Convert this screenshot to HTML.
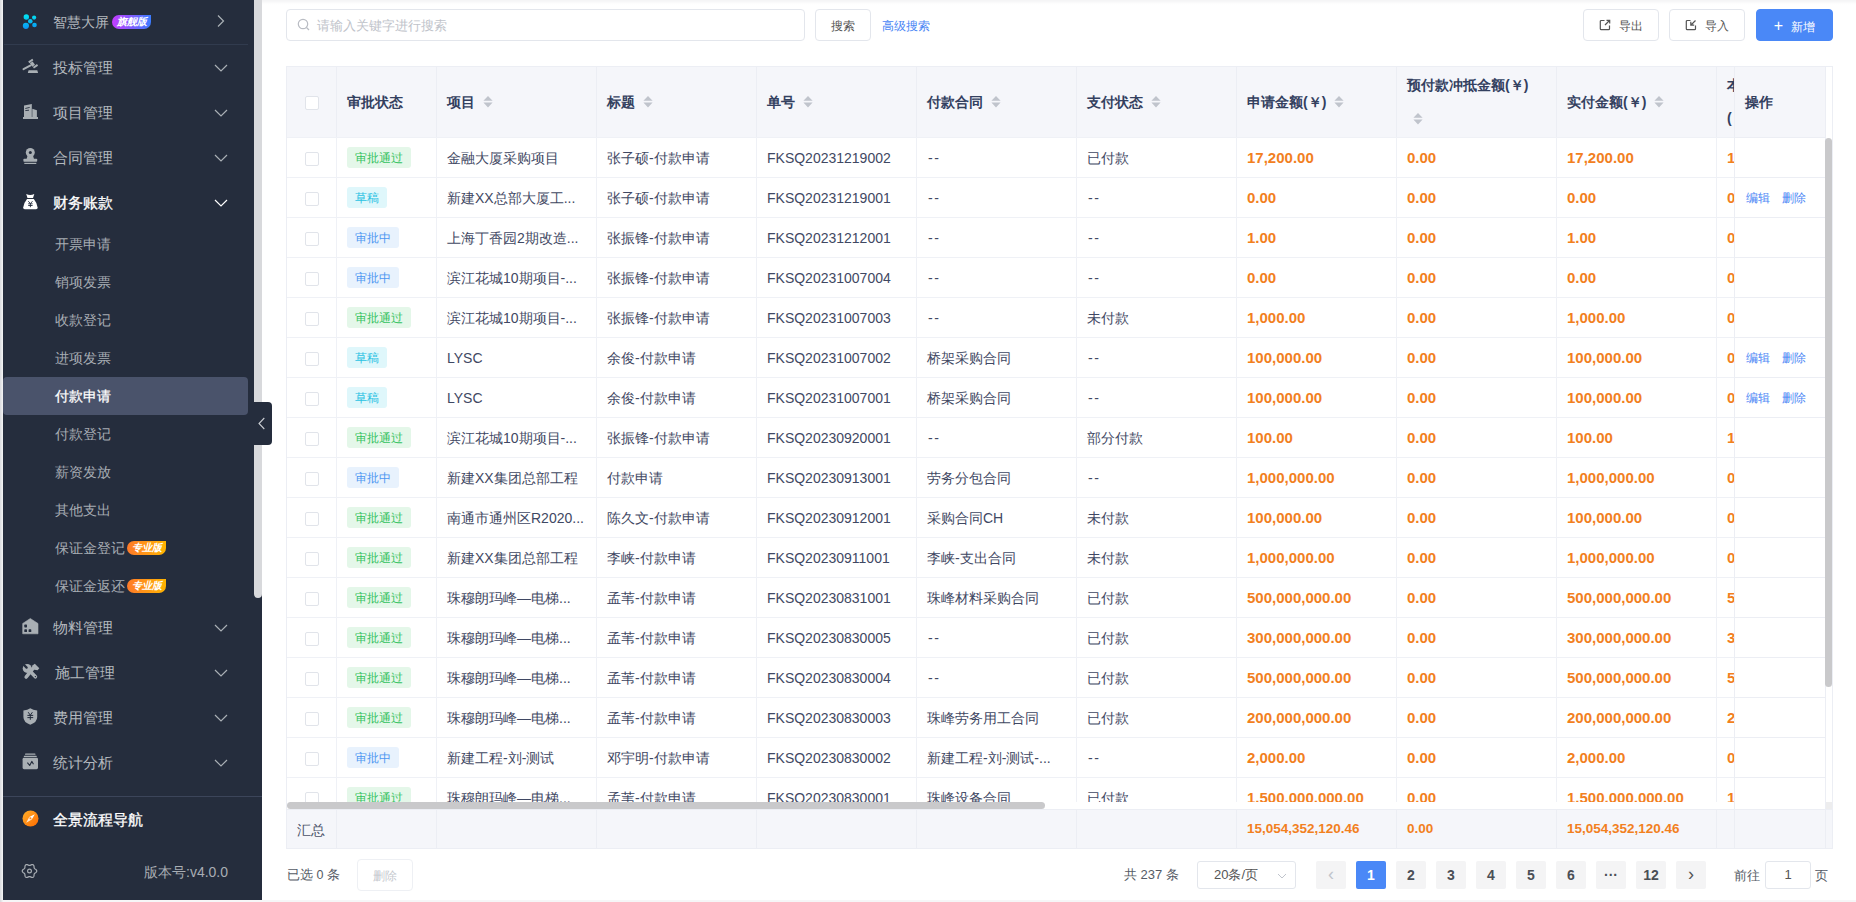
<!DOCTYPE html>
<html><head><meta charset="utf-8">
<style>
*{box-sizing:border-box;margin:0;padding:0}
html,body{width:1856px;height:902px;overflow:hidden;background:#f6f6f7;font-family:"Liberation Sans",sans-serif;}
.abs{position:absolute}
#side{position:absolute;left:3px;top:0;width:259px;height:900px;background:#252d3d;overflow:hidden}
#lstrip{position:absolute;left:0;top:0;width:3px;height:902px;background:linear-gradient(90deg,#d9dadd,#f4f4f5)}
.mi{position:absolute;left:0;width:245px;height:45px;color:#b3b8be;font-size:15px;line-height:45px}
.mi .t{position:absolute;left:50px;top:0}
.mi svg.ic{position:absolute;left:15px;top:10px}
.mi .chev{position:absolute;left:211px;top:19px}
.sub{position:absolute;left:0;width:245px;height:38px;color:#a7acb3;font-size:14px;line-height:38px}
.sub .t{position:absolute;left:52px;top:0}
.sub.act{background:#4a536b;color:#fff;border-radius:4px;-webkit-text-stroke:0.25px #fff}
.badge{position:absolute;height:14px;border-radius:7px 0 7px 7px;color:#fff;font-size:10px;line-height:14px;font-style:italic;text-align:center;font-weight:bold}
#thumb{position:absolute;left:254px;top:0;width:8px;height:598px;background:#d8d9dc;border-radius:0 0 4px 4px;z-index:5}
#coll{position:absolute;left:254px;top:402px;width:18px;height:43px;background:#252d3d;border-radius:0 4px 4px 0;z-index:6}
#main{position:absolute;left:262px;top:0;width:1594px;height:900px;background:linear-gradient(180deg,#f4f4f5 0,#f8f8f9 2px,#fcfcfc 3px,#fff 5px);}
.btn{position:absolute;height:32px;border:1px solid #e3e6ec;border-radius:4px;background:#fff;color:#555;font-size:12px;line-height:32px;text-align:center}
.tbl{position:absolute;left:286px;top:66px;width:1547px;height:783px;overflow:hidden}
.head{position:absolute;left:0;top:0;width:1539px;height:71px;background:#f5f6fa}
.vl{position:absolute;top:0;width:1px;height:736px;background:#eff1f6}
.hl{position:absolute;left:0;width:1448px;height:1px;background:#eff1f6}
.row{position:absolute;left:0;width:1448px;height:40px}
.c{position:absolute;top:1px;line-height:41px;font-size:14px;color:#3f4863;white-space:nowrap}
.amt{color:#f2801e;font-weight:bold;font-size:15px;top:0px}
.cb{position:absolute;top:15px;width:14px;height:14px;border:1px solid #e1e4ea;border-radius:2px;background:#fff}
.tag{position:absolute;top:10px;height:21px;line-height:22px;font-size:12px;padding:0 8px;border-radius:3px;white-space:nowrap}
.tg{background:#e4f7e9;color:#33c25e}
.td{background:#dff7fb;color:#2bc2e3}
.tb{background:#e8f2fd;color:#4c96f1}
.hd{position:absolute;top:1px;line-height:71px;font-size:14px;font-weight:bold;color:#33405f;white-space:nowrap}
.sort{display:inline-block;vertical-align:middle;margin-left:8px;width:10px;height:12px;position:relative;top:-1px}
.fixed{position:absolute;left:1448px;top:0;width:91px;height:743px;background:#fff;border-left:1px solid #eceef4}
.frow{position:absolute;left:0;width:90px;height:40px;border-top:1px solid #eceef4}
.op{position:absolute;top:0;line-height:40px;font-size:12px;color:#4a86f5}
.sum{position:absolute;left:0;top:743px;width:1547px;height:40px;background:#f5f6fa;border-top:1px solid #eceef4;border-bottom:1px solid #eceef4}
.pg{position:absolute;top:861px;width:30px;height:28px;background:#f4f4f5;border-radius:2px;font-size:14px;font-weight:bold;color:#4b4f56;text-align:center;line-height:28px}
</style></head>
<body>
<div id="lstrip"></div>
<div id="side">
  <!-- top item -->
  <div class="mi" style="top:-1px;height:45px">
    <svg class="ic" width="24" height="24" viewBox="0 0 24 24" style="left:15px;top:11px">
      <defs><linearGradient id="lg1" gradientUnits="userSpaceOnUse" x1="0" y1="4" x2="0" y2="19"><stop offset="0" stop-color="#00e8f2"/><stop offset="1" stop-color="#0b94f2"/></linearGradient></defs>
      <circle cx="8.3" cy="7.0" r="2.7" fill="url(#lg1)"/><circle cx="16.1" cy="7.6" r="2.1" fill="url(#lg1)"/>
      <circle cx="12.3" cy="11.2" r="2.3" fill="url(#lg1)"/><circle cx="7.9" cy="15.8" r="3.1" fill="url(#lg1)"/>
      <circle cx="16.5" cy="15.0" r="2.3" fill="url(#lg1)"/>
    </svg>
    <span class="t" style="left:50px;font-size:14px;top:1px">智慧大屏</span>
    <svg class="chev" width="14" height="14" viewBox="0 0 14 14" style="left:211px;top:15px"><path d="M4 1.5 L9.5 7 L4 12.5" fill="none" stroke="#aab0b6" stroke-width="1.2"/></svg>
  </div>
  <div class="badge" style="left:109px;top:15px;width:39px;background:linear-gradient(90deg,#c53cff,#3b7cff)">旗舰版</div>
  <div class="abs" style="left:1px;top:44px;width:244px;height:1px;background:#313b4e"></div>

  <div class="mi" style="top:45px"><svg class="ic" width="24" height="24" viewBox="0 0 24 24"><path d="M10.2 6.6 L14.3 3.7 L15.4 5.3 L11.3 8.2 Z M11.9 8.3 L14.6 6.4 L17.0 9.8 L14.3 11.7 Z M14.9 12.0 L19.0 9.1 L20.1 10.7 L16.0 13.6 Z" fill="#a9afb4"/><path d="M5.5 14.2 L12.6 10.4" stroke="#a9afb4" stroke-width="1.9" stroke-linecap="round"/><path d="M10.6 15.2 H19.3 L20.1 18 H9.8 Z" fill="#a9afb4"/></svg><span class="t">投标管理</span><svg class="chev" width="14" height="8" viewBox="0 0 14 8"><path d="M1 1 L7 7 L13 1" fill="none" stroke="#aab0b6" stroke-width="1.2"/></svg></div>
<div class="mi" style="top:90px"><svg class="ic" width="24" height="24" viewBox="0 0 24 24"><path d="M6 5.6 L13.8 4.0 V17 H6 Z" fill="#a9afb4"/><path d="M14.3 8.8 L18.9 10.3 V17 H14.3 Z" fill="#a9afb4"/><path d="M5 17 H20 V19 H5 Z" fill="#a9afb4"/><path d="M7.3 8.5 L11.7 7.4 M7.3 10.6 L11 10.2" stroke="#252d3d" stroke-width="0.9"/></svg><span class="t">项目管理</span><svg class="chev" width="14" height="8" viewBox="0 0 14 8"><path d="M1 1 L7 7 L13 1" fill="none" stroke="#aab0b6" stroke-width="1.2"/></svg></div>
<div class="mi" style="top:135px"><svg class="ic" width="24" height="24" viewBox="0 0 24 24"><circle cx="12.3" cy="7.5" r="4.5" fill="#a9afb4"/><circle cx="12.3" cy="7.5" r="1.5" fill="#252d3d"/><path d="M9.6 10.5 H15 L16 14 H8.6 Z" fill="#a9afb4"/><rect x="5.4" y="13.8" width="13.8" height="3" rx="0.8" fill="#a9afb4"/><rect x="6.3" y="17.8" width="12" height="1.2" fill="#a9afb4"/></svg><span class="t">合同管理</span><svg class="chev" width="14" height="8" viewBox="0 0 14 8"><path d="M1 1 L7 7 L13 1" fill="none" stroke="#aab0b6" stroke-width="1.2"/></svg></div>
<div class="mi" style="top:180px"><svg class="ic" width="24" height="24" viewBox="0 0 24 24"><path d="M8.2 4 Q12.2 5.8 16.3 4 L15 8 H9.5 Z" fill="#fff"/><path d="M9 9 H15.8 Q18.8 12.5 19.6 17.5 Q19.8 19.2 18 19.2 H6.8 Q5 19.2 5.2 17.5 Q6 12.5 9 9 Z" fill="#fff"/><path d="M10.3 11.2 L12.4 13.6 L14.5 11.2 M10.2 13.8 H14.6 M10.2 15.5 H14.6 M12.4 13.6 V17.2" fill="none" stroke="#252d3d" stroke-width="0.9"/></svg><span class="t" style="color:#fff;-webkit-text-stroke:0.3px #fff">财务账款</span><svg class="chev" width="14" height="8" viewBox="0 0 14 8"><path d="M1 1 L7 7 L13 1" fill="none" stroke="#fff" stroke-width="1.2"/></svg></div>
<div class="sub" style="top:225px"><span class="t">开票申请</span></div>
<div class="sub" style="top:263px"><span class="t">销项发票</span></div>
<div class="sub" style="top:301px"><span class="t">收款登记</span></div>
<div class="sub" style="top:339px"><span class="t">进项发票</span></div>
<div class="sub act" style="top:377px"><span class="t">付款申请</span></div>
<div class="sub" style="top:415px"><span class="t">付款登记</span></div>
<div class="sub" style="top:453px"><span class="t">薪资发放</span></div>
<div class="sub" style="top:491px"><span class="t">其他支出</span></div>
<div class="sub" style="top:529px"><span class="t">保证金登记</span></div>
<div class="badge" style="left:124px;top:541px;width:39px;background:linear-gradient(90deg,#ff7a2a,#ffb400)">专业版</div>
<div class="sub" style="top:567px"><span class="t">保证金返还</span></div>
<div class="badge" style="left:124px;top:579px;width:39px;background:linear-gradient(90deg,#ff7a2a,#ffb400)">专业版</div>
<div class="mi" style="top:605px"><svg class="ic" width="24" height="24" viewBox="0 0 24 24"><path d="M12.3 3.5 L20 8.5 V18.8 H4.7 V8.5 Z" fill="#a9afb4" stroke="#a9afb4" stroke-width="0.6" stroke-linejoin="round"/><rect x="6.3" y="9.6" width="2.7" height="2.8" rx="0.6" fill="#252d3d"/><rect x="6.3" y="14.3" width="2.7" height="2.8" rx="0.6" fill="#252d3d"/><rect x="10.6" y="14.3" width="2.7" height="2.8" rx="0.6" fill="#252d3d"/></svg><span class="t">物料管理</span><svg class="chev" width="14" height="8" viewBox="0 0 14 8"><path d="M1 1 L7 7 L13 1" fill="none" stroke="#aab0b6" stroke-width="1.2"/></svg></div>
<div class="mi" style="top:650px"><svg class="ic" width="24" height="24" viewBox="0 0 24 24"><circle cx="9.2" cy="8.4" r="4.5" fill="#a9afb4"/><path d="M4.8 3.8 L8.6 7.6" stroke="#252d3d" stroke-width="2.3" stroke-linecap="round"/><path d="M11.6 10.8 L17.4 16.8" stroke="#a9afb4" stroke-width="3.6" stroke-linecap="round"/><path d="M15.6 7.6 L8.2 17" stroke="#a9afb4" stroke-width="3.6" stroke-linecap="round"/><path d="M14 5.8 L16.8 3.8 L21.3 8.2 L19.6 10.2 L16.4 9.8 Z" fill="#a9afb4"/><circle cx="17.4" cy="16.6" r="0.7" fill="#252d3d"/></svg><span class="t" style="left:52px">施工管理</span><svg class="chev" width="14" height="8" viewBox="0 0 14 8"><path d="M1 1 L7 7 L13 1" fill="none" stroke="#aab0b6" stroke-width="1.2"/></svg></div>
<div class="mi" style="top:695px"><svg class="ic" width="24" height="24" viewBox="0 0 24 24"><path d="M12.3 3.2 Q15 4.9 19.2 5.6 V12 Q19.2 17.3 12.3 19.8 Q5.4 17.3 5.4 12 V5.6 Q9.6 4.9 12.3 3.2 Z" fill="#a9afb4"/><path d="M10.2 7.2 L12.3 10.2 L14.4 7.2 M9.4 10.4 H15.2 M9.4 12.6 H15.2 M12.3 10.2 V14.8" fill="none" stroke="#252d3d" stroke-width="1"/></svg><span class="t">费用管理</span><svg class="chev" width="14" height="8" viewBox="0 0 14 8"><path d="M1 1 L7 7 L13 1" fill="none" stroke="#aab0b6" stroke-width="1.2"/></svg></div>
<div class="mi" style="top:740px"><svg class="ic" width="24" height="24" viewBox="0 0 24 24"><rect x="7" y="3.6" width="10.5" height="1.2" rx="0.6" fill="#a9afb4"/><rect x="5.8" y="5.8" width="13" height="1.2" rx="0.6" fill="#a9afb4"/><rect x="4.6" y="7.8" width="15.4" height="11.4" rx="1.4" fill="#a9afb4"/><path d="M9.4 12.6 L11.7 15.5 L13.8 11.4 L15.5 14.3" fill="none" stroke="#252d3d" stroke-width="1.1" stroke-linejoin="round"/></svg><span class="t">统计分析</span><svg class="chev" width="14" height="8" viewBox="0 0 14 8"><path d="M1 1 L7 7 L13 1" fill="none" stroke="#aab0b6" stroke-width="1.2"/></svg></div>
  <div class="abs" style="left:0;top:796px;width:259px;height:1px;background:#3c455a"></div>
  <div class="mi" style="top:797px">
    <svg class="ic" width="24" height="24" viewBox="0 0 24 24" style="left:15px;top:10px">
      <defs><linearGradient id="og" x1="0" y1="0" x2="1" y2="1"><stop offset="0" stop-color="#ffb02a"/><stop offset="1" stop-color="#ff6a00"/></linearGradient></defs>
      <circle cx="12.5" cy="11.5" r="8" fill="url(#og)"/>
      <path d="M16.8 7.2 L13.8 12.6 L11.2 10.0 Z" fill="#fff"/><path d="M8.2 15.8 L11.2 10.0 L13.8 12.6 Z" fill="#ffe8d0"/>
      <circle cx="12.5" cy="11.3" r="1" fill="#ff8a1a"/>
    </svg>
    <span class="t" style="color:#fff;-webkit-text-stroke:0.3px #fff;left:50px">全景流程导航</span>
  </div>
  <svg class="abs" width="18" height="18" viewBox="0 0 18 18" style="left:18px;top:862px">
    <path d="M15.75 9.00 L15.61 9.62 L15.22 10.19 L14.68 10.66 L14.11 11.04 L13.63 11.39 L13.31 11.78 L13.14 12.25 L13.08 12.84 L13.03 13.53 L12.89 14.23 L12.59 14.85 L12.12 15.28 L11.52 15.47 L10.83 15.41 L10.16 15.18 L9.54 14.88 L8.99 14.64 L8.50 14.55 L8.01 14.64 L7.46 14.88 L6.84 15.18 L6.17 15.41 L5.48 15.47 L4.88 15.28 L4.41 14.85 L4.11 14.23 L3.97 13.53 L3.92 12.84 L3.86 12.25 L3.69 11.78 L3.37 11.39 L2.89 11.04 L2.32 10.66 L1.78 10.19 L1.39 9.62 L1.25 9.00 L1.39 8.38 L1.78 7.81 L2.32 7.34 L2.89 6.96 L3.37 6.61 L3.69 6.22 L3.86 5.75 L3.92 5.16 L3.97 4.47 L4.11 3.77 L4.41 3.15 L4.87 2.72 L5.48 2.53 L6.17 2.59 L6.84 2.82 L7.46 3.12 L8.01 3.36 L8.50 3.45 L8.99 3.36 L9.54 3.12 L10.16 2.82 L10.83 2.59 L11.52 2.53 L12.12 2.72 L12.59 3.15 L12.89 3.77 L13.03 4.47 L13.08 5.16 L13.14 5.75 L13.31 6.23 L13.63 6.61 L14.11 6.96 L14.68 7.34 L15.22 7.81 L15.61 8.38 Z" fill="none" stroke="#a9aeb4" stroke-width="1.2" stroke-linejoin="round"/>
    <circle cx="8.5" cy="9" r="1.9" fill="none" stroke="#a9aeb4" stroke-width="1.2"/>
  </svg>
  <span class="abs" style="left:141px;top:862px;font-size:14px;color:#a9aeb4;line-height:20px">版本号:v4.0.0</span>
</div>
<div id="thumb"></div>
<div id="coll"><svg width="18" height="43" viewBox="0 0 18 43"><path d="M10.3 16 L5 21.5 L10.3 27" fill="none" stroke="#c9ccd1" stroke-width="1.1"/></svg></div>

<div id="main"></div>
<!-- toolbar -->
<div class="abs" style="left:286px;top:9px;width:519px;height:32px;border:1px solid #e3e6ec;border-radius:4px;background:#fff">
  <svg class="abs" width="14" height="14" viewBox="0 0 14 14" style="left:10px;top:8px"><circle cx="6" cy="6" r="4.7" fill="none" stroke="#b9bcc3" stroke-width="1.2"/><path d="M9.5 9.5 L12 12" stroke="#b9bcc3" stroke-width="1.2"/></svg>
  <span class="abs" style="left:30px;top:1px;line-height:30px;font-size:13px;color:#c0c3ca">请输入关键字进行搜索</span>
</div>
<div class="btn" style="left:815px;top:9px;width:56px">搜索</div>
<span class="abs" style="left:882px;top:10px;line-height:32px;font-size:12px;color:#4a86f5">高级搜索</span>
<div class="btn" style="left:1583px;top:9px;width:76px"><svg width="12" height="12" viewBox="0 0 12 12" style="vertical-align:-1px;margin-right:8px"><path d="M5.5 1.5 H2.3 Q1.3 1.5 1.3 2.5 V9.7 Q1.3 10.7 2.3 10.7 H9.5 Q10.5 10.7 10.5 9.7 V6.5" fill="none" stroke="#555" stroke-width="1.2"/><path d="M6 6 L10.5 1.5 M7.5 1.3 H10.7 V4.5" fill="none" stroke="#555" stroke-width="1.2"/></svg>导出</div>
<div class="btn" style="left:1669px;top:9px;width:76px"><svg width="12" height="12" viewBox="0 0 12 12" style="vertical-align:-1px;margin-right:8px"><path d="M5.5 1.5 H2.3 Q1.3 1.5 1.3 2.5 V9.7 Q1.3 10.7 2.3 10.7 H9.5 Q10.5 10.7 10.5 9.7 V6.5" fill="none" stroke="#555" stroke-width="1.2"/><path d="M10.5 1.5 L6 6 M5.8 2.8 V6.2 H9.2" fill="none" stroke="#555" stroke-width="1.2"/></svg>导入</div>
<div class="btn" style="left:1756px;top:9px;width:77px;background:#4a88f7;border-color:#4a88f7;color:#fff"><span style="font-size:16px;margin-right:8px">+</span>新增</div>

<div class="tbl">
  <div class="head"></div>
  <div class="abs" style="left:50px;top:0;width:1px;height:71px;background:#eceef4"></div><div class="abs" style="left:150px;top:0;width:1px;height:71px;background:#eceef4"></div><div class="abs" style="left:310px;top:0;width:1px;height:71px;background:#eceef4"></div><div class="abs" style="left:470px;top:0;width:1px;height:71px;background:#eceef4"></div><div class="abs" style="left:630px;top:0;width:1px;height:71px;background:#eceef4"></div><div class="abs" style="left:790px;top:0;width:1px;height:71px;background:#eceef4"></div><div class="abs" style="left:950px;top:0;width:1px;height:71px;background:#eceef4"></div><div class="abs" style="left:1110px;top:0;width:1px;height:71px;background:#eceef4"></div><div class="abs" style="left:1270px;top:0;width:1px;height:71px;background:#eceef4"></div><div class="abs" style="left:1430px;top:0;width:1px;height:71px;background:#eceef4"></div><div class="cb" style="left:19px;top:30px"></div>
<span class="hd" style="left:61px">审批状态</span>
<span class="hd" style="left:161px">项目<svg class="sort" viewBox="0 0 10 12"><path d="M5 0 L9.6 4.8 H0.4 Z M5 11.4 L9.6 6.6 H0.4 Z" fill="#c0c4cc"/></svg></span>
<span class="hd" style="left:321px">标题<svg class="sort" viewBox="0 0 10 12"><path d="M5 0 L9.6 4.8 H0.4 Z M5 11.4 L9.6 6.6 H0.4 Z" fill="#c0c4cc"/></svg></span>
<span class="hd" style="left:481px">单号<svg class="sort" viewBox="0 0 10 12"><path d="M5 0 L9.6 4.8 H0.4 Z M5 11.4 L9.6 6.6 H0.4 Z" fill="#c0c4cc"/></svg></span>
<span class="hd" style="left:641px">付款合同<svg class="sort" viewBox="0 0 10 12"><path d="M5 0 L9.6 4.8 H0.4 Z M5 11.4 L9.6 6.6 H0.4 Z" fill="#c0c4cc"/></svg></span>
<span class="hd" style="left:801px">支付状态<svg class="sort" viewBox="0 0 10 12"><path d="M5 0 L9.6 4.8 H0.4 Z M5 11.4 L9.6 6.6 H0.4 Z" fill="#c0c4cc"/></svg></span>
<span class="hd" style="left:961px">申请金额(￥)<svg class="sort" viewBox="0 0 10 12"><path d="M5 0 L9.6 4.8 H0.4 Z M5 11.4 L9.6 6.6 H0.4 Z" fill="#c0c4cc"/></svg></span>
<span class="hd" style="left:1281px">实付金额(￥)<svg class="sort" viewBox="0 0 10 12"><path d="M5 0 L9.6 4.8 H0.4 Z M5 11.4 L9.6 6.6 H0.4 Z" fill="#c0c4cc"/></svg></span>
<span class="hd" style="left:1121px;line-height:20px;top:9px">预付款冲抵金额(￥)</span>
<svg class="abs" viewBox="0 0 10 12" width="10" height="12" style="left:1127px;top:47px"><path d="M5 0 L9.6 4.8 H0.4 Z M5 11.4 L9.6 6.6 H0.4 Z" fill="#c0c4cc"/></svg>
<div class="abs" style="left:1430px;top:0;width:18px;height:71px;overflow:hidden"><span class="hd" style="left:11px;line-height:20px;top:9px;white-space:normal;width:14px">本<br><span style="position:relative;top:13px">(</span></span></div>
  <div class="abs" style="left:0;top:71px;width:1448px;height:665px;overflow:hidden">
    <div class="abs" style="left:0;top:-71px;width:1448px;height:800px">
    <div class="vl" style="left:50px"></div><div class="vl" style="left:150px"></div><div class="vl" style="left:310px"></div><div class="vl" style="left:470px"></div><div class="vl" style="left:630px"></div><div class="vl" style="left:790px"></div><div class="vl" style="left:950px"></div><div class="vl" style="left:1110px"></div><div class="vl" style="left:1270px"></div><div class="vl" style="left:1430px"></div>
    <div class="hl" style="top:71px"></div><div class="hl" style="top:111px"></div><div class="hl" style="top:151px"></div><div class="hl" style="top:191px"></div><div class="hl" style="top:231px"></div><div class="hl" style="top:271px"></div><div class="hl" style="top:311px"></div><div class="hl" style="top:351px"></div><div class="hl" style="top:391px"></div><div class="hl" style="top:431px"></div><div class="hl" style="top:471px"></div><div class="hl" style="top:511px"></div><div class="hl" style="top:551px"></div><div class="hl" style="top:591px"></div><div class="hl" style="top:631px"></div><div class="hl" style="top:671px"></div><div class="hl" style="top:711px"></div><div class="hl" style="top:751px"></div>
    <div class="row" style="top:71px"><div class="cb" style="left:19px"></div><span class="tag tg" style="left:61px">审批通过</span><span class="c" style="left:161px">金融大厦采购项目</span><span class="c" style="left:321px">张子硕-付款申请</span><span class="c" style="left:481px">FKSQ20231219002</span><span class="c" style="left:641px;letter-spacing:1.5px;padding-left:1px">--</span><span class="c" style="left:801px">已付款</span><span class="c amt" style="left:961px">17,200.00</span><span class="c amt" style="left:1121px">0.00</span><span class="c amt" style="left:1281px">17,200.00</span><span class="c amt" style="left:1441px">1</span></div>
<div class="row" style="top:111px"><div class="cb" style="left:19px"></div><span class="tag td" style="left:61px">草稿</span><span class="c" style="left:161px">新建XX总部大厦工...</span><span class="c" style="left:321px">张子硕-付款申请</span><span class="c" style="left:481px">FKSQ20231219001</span><span class="c" style="left:641px;letter-spacing:1.5px;padding-left:1px">--</span><span class="c" style="left:801px;letter-spacing:1.5px;padding-left:1px">--</span><span class="c amt" style="left:961px">0.00</span><span class="c amt" style="left:1121px">0.00</span><span class="c amt" style="left:1281px">0.00</span><span class="c amt" style="left:1441px">0</span></div>
<div class="row" style="top:151px"><div class="cb" style="left:19px"></div><span class="tag tb" style="left:61px">审批中</span><span class="c" style="left:161px">上海丁香园2期改造...</span><span class="c" style="left:321px">张振锋-付款申请</span><span class="c" style="left:481px">FKSQ20231212001</span><span class="c" style="left:641px;letter-spacing:1.5px;padding-left:1px">--</span><span class="c" style="left:801px;letter-spacing:1.5px;padding-left:1px">--</span><span class="c amt" style="left:961px">1.00</span><span class="c amt" style="left:1121px">0.00</span><span class="c amt" style="left:1281px">1.00</span><span class="c amt" style="left:1441px">0</span></div>
<div class="row" style="top:191px"><div class="cb" style="left:19px"></div><span class="tag tb" style="left:61px">审批中</span><span class="c" style="left:161px">滨江花城10期项目-...</span><span class="c" style="left:321px">张振锋-付款申请</span><span class="c" style="left:481px">FKSQ20231007004</span><span class="c" style="left:641px;letter-spacing:1.5px;padding-left:1px">--</span><span class="c" style="left:801px;letter-spacing:1.5px;padding-left:1px">--</span><span class="c amt" style="left:961px">0.00</span><span class="c amt" style="left:1121px">0.00</span><span class="c amt" style="left:1281px">0.00</span><span class="c amt" style="left:1441px">0</span></div>
<div class="row" style="top:231px"><div class="cb" style="left:19px"></div><span class="tag tg" style="left:61px">审批通过</span><span class="c" style="left:161px">滨江花城10期项目-...</span><span class="c" style="left:321px">张振锋-付款申请</span><span class="c" style="left:481px">FKSQ20231007003</span><span class="c" style="left:641px;letter-spacing:1.5px;padding-left:1px">--</span><span class="c" style="left:801px">未付款</span><span class="c amt" style="left:961px">1,000.00</span><span class="c amt" style="left:1121px">0.00</span><span class="c amt" style="left:1281px">1,000.00</span><span class="c amt" style="left:1441px">0</span></div>
<div class="row" style="top:271px"><div class="cb" style="left:19px"></div><span class="tag td" style="left:61px">草稿</span><span class="c" style="left:161px">LYSC</span><span class="c" style="left:321px">余俊-付款申请</span><span class="c" style="left:481px">FKSQ20231007002</span><span class="c" style="left:641px">桥架采购合同</span><span class="c" style="left:801px;letter-spacing:1.5px;padding-left:1px">--</span><span class="c amt" style="left:961px">100,000.00</span><span class="c amt" style="left:1121px">0.00</span><span class="c amt" style="left:1281px">100,000.00</span><span class="c amt" style="left:1441px">0</span></div>
<div class="row" style="top:311px"><div class="cb" style="left:19px"></div><span class="tag td" style="left:61px">草稿</span><span class="c" style="left:161px">LYSC</span><span class="c" style="left:321px">余俊-付款申请</span><span class="c" style="left:481px">FKSQ20231007001</span><span class="c" style="left:641px">桥架采购合同</span><span class="c" style="left:801px;letter-spacing:1.5px;padding-left:1px">--</span><span class="c amt" style="left:961px">100,000.00</span><span class="c amt" style="left:1121px">0.00</span><span class="c amt" style="left:1281px">100,000.00</span><span class="c amt" style="left:1441px">0</span></div>
<div class="row" style="top:351px"><div class="cb" style="left:19px"></div><span class="tag tg" style="left:61px">审批通过</span><span class="c" style="left:161px">滨江花城10期项目-...</span><span class="c" style="left:321px">张振锋-付款申请</span><span class="c" style="left:481px">FKSQ20230920001</span><span class="c" style="left:641px;letter-spacing:1.5px;padding-left:1px">--</span><span class="c" style="left:801px">部分付款</span><span class="c amt" style="left:961px">100.00</span><span class="c amt" style="left:1121px">0.00</span><span class="c amt" style="left:1281px">100.00</span><span class="c amt" style="left:1441px">1</span></div>
<div class="row" style="top:391px"><div class="cb" style="left:19px"></div><span class="tag tb" style="left:61px">审批中</span><span class="c" style="left:161px">新建XX集团总部工程</span><span class="c" style="left:321px">付款申请</span><span class="c" style="left:481px">FKSQ20230913001</span><span class="c" style="left:641px">劳务分包合同</span><span class="c" style="left:801px;letter-spacing:1.5px;padding-left:1px">--</span><span class="c amt" style="left:961px">1,000,000.00</span><span class="c amt" style="left:1121px">0.00</span><span class="c amt" style="left:1281px">1,000,000.00</span><span class="c amt" style="left:1441px">0</span></div>
<div class="row" style="top:431px"><div class="cb" style="left:19px"></div><span class="tag tg" style="left:61px">审批通过</span><span class="c" style="left:161px">南通市通州区R2020...</span><span class="c" style="left:321px">陈久文-付款申请</span><span class="c" style="left:481px">FKSQ20230912001</span><span class="c" style="left:641px">采购合同CH</span><span class="c" style="left:801px">未付款</span><span class="c amt" style="left:961px">100,000.00</span><span class="c amt" style="left:1121px">0.00</span><span class="c amt" style="left:1281px">100,000.00</span><span class="c amt" style="left:1441px">0</span></div>
<div class="row" style="top:471px"><div class="cb" style="left:19px"></div><span class="tag tg" style="left:61px">审批通过</span><span class="c" style="left:161px">新建XX集团总部工程</span><span class="c" style="left:321px">李峡-付款申请</span><span class="c" style="left:481px">FKSQ20230911001</span><span class="c" style="left:641px">李峡-支出合同</span><span class="c" style="left:801px">未付款</span><span class="c amt" style="left:961px">1,000,000.00</span><span class="c amt" style="left:1121px">0.00</span><span class="c amt" style="left:1281px">1,000,000.00</span><span class="c amt" style="left:1441px">0</span></div>
<div class="row" style="top:511px"><div class="cb" style="left:19px"></div><span class="tag tg" style="left:61px">审批通过</span><span class="c" style="left:161px">珠穆朗玛峰—电梯...</span><span class="c" style="left:321px">孟苇-付款申请</span><span class="c" style="left:481px">FKSQ20230831001</span><span class="c" style="left:641px">珠峰材料采购合同</span><span class="c" style="left:801px">已付款</span><span class="c amt" style="left:961px">500,000,000.00</span><span class="c amt" style="left:1121px">0.00</span><span class="c amt" style="left:1281px">500,000,000.00</span><span class="c amt" style="left:1441px">5</span></div>
<div class="row" style="top:551px"><div class="cb" style="left:19px"></div><span class="tag tg" style="left:61px">审批通过</span><span class="c" style="left:161px">珠穆朗玛峰—电梯...</span><span class="c" style="left:321px">孟苇-付款申请</span><span class="c" style="left:481px">FKSQ20230830005</span><span class="c" style="left:641px;letter-spacing:1.5px;padding-left:1px">--</span><span class="c" style="left:801px">已付款</span><span class="c amt" style="left:961px">300,000,000.00</span><span class="c amt" style="left:1121px">0.00</span><span class="c amt" style="left:1281px">300,000,000.00</span><span class="c amt" style="left:1441px">3</span></div>
<div class="row" style="top:591px"><div class="cb" style="left:19px"></div><span class="tag tg" style="left:61px">审批通过</span><span class="c" style="left:161px">珠穆朗玛峰—电梯...</span><span class="c" style="left:321px">孟苇-付款申请</span><span class="c" style="left:481px">FKSQ20230830004</span><span class="c" style="left:641px;letter-spacing:1.5px;padding-left:1px">--</span><span class="c" style="left:801px">已付款</span><span class="c amt" style="left:961px">500,000,000.00</span><span class="c amt" style="left:1121px">0.00</span><span class="c amt" style="left:1281px">500,000,000.00</span><span class="c amt" style="left:1441px">5</span></div>
<div class="row" style="top:631px"><div class="cb" style="left:19px"></div><span class="tag tg" style="left:61px">审批通过</span><span class="c" style="left:161px">珠穆朗玛峰—电梯...</span><span class="c" style="left:321px">孟苇-付款申请</span><span class="c" style="left:481px">FKSQ20230830003</span><span class="c" style="left:641px">珠峰劳务用工合同</span><span class="c" style="left:801px">已付款</span><span class="c amt" style="left:961px">200,000,000.00</span><span class="c amt" style="left:1121px">0.00</span><span class="c amt" style="left:1281px">200,000,000.00</span><span class="c amt" style="left:1441px">2</span></div>
<div class="row" style="top:671px"><div class="cb" style="left:19px"></div><span class="tag tb" style="left:61px">审批中</span><span class="c" style="left:161px">新建工程-刘-测试</span><span class="c" style="left:321px">邓宇明-付款申请</span><span class="c" style="left:481px">FKSQ20230830002</span><span class="c" style="left:641px">新建工程-刘-测试-...</span><span class="c" style="left:801px;letter-spacing:1.5px;padding-left:1px">--</span><span class="c amt" style="left:961px">2,000.00</span><span class="c amt" style="left:1121px">0.00</span><span class="c amt" style="left:1281px">2,000.00</span><span class="c amt" style="left:1441px">0</span></div>
<div class="row" style="top:711px"><div class="cb" style="left:19px"></div><span class="tag tg" style="left:61px">审批通过</span><span class="c" style="left:161px">珠穆朗玛峰—电梯...</span><span class="c" style="left:321px">孟苇-付款申请</span><span class="c" style="left:481px">FKSQ20230830001</span><span class="c" style="left:641px">珠峰设备合同</span><span class="c" style="left:801px">已付款</span><span class="c amt" style="left:961px">1,500,000,000.00</span><span class="c amt" style="left:1121px">0.00</span><span class="c amt" style="left:1281px">1,500,000,000.00</span><span class="c amt" style="left:1441px">1</span></div>
    </div>
  </div>
  <div class="fixed">
    <div class="abs" style="left:0;top:0;width:90px;height:71px;background:#f5f6fa"></div>
    <span class="hd" style="left:10px">操作</span>
    <div class="frow" style="top:71px"></div>
<div class="frow" style="top:111px"><span class="op" style="left:11px">编辑</span><span class="op" style="left:47px">删除</span></div>
<div class="frow" style="top:151px"></div>
<div class="frow" style="top:191px"></div>
<div class="frow" style="top:231px"></div>
<div class="frow" style="top:271px"><span class="op" style="left:11px">编辑</span><span class="op" style="left:47px">删除</span></div>
<div class="frow" style="top:311px"><span class="op" style="left:11px">编辑</span><span class="op" style="left:47px">删除</span></div>
<div class="frow" style="top:351px"></div>
<div class="frow" style="top:391px"></div>
<div class="frow" style="top:431px"></div>
<div class="frow" style="top:471px"></div>
<div class="frow" style="top:511px"></div>
<div class="frow" style="top:551px"></div>
<div class="frow" style="top:591px"></div>
<div class="frow" style="top:631px"></div>
<div class="frow" style="top:671px"></div>
<div class="frow" style="top:711px"></div>
  </div>
  <div class="abs" style="left:1539px;top:0;width:8px;height:743px;background:#fff;border-left:1px solid #eceef4"></div>
  <div class="abs" style="left:1539px;top:72px;width:7px;height:549px;background:#c9c9cb;border-radius:4px"></div>
  <div class="abs" style="left:1px;top:736px;width:758px;height:7px;background:#c9c9cb;border-radius:4px"></div>
  <div class="abs" style="left:1540px;top:736px;width:6px;height:7px;background:#ededee"></div>
  <div class="sum">
    <span class="c" style="left:11px;line-height:38px;color:#4a5268">汇总</span>
    <div class="abs" style="left:50px;top:0;width:1px;height:38px;background:#eceef4"></div>
<div class="abs" style="left:150px;top:0;width:1px;height:38px;background:#eceef4"></div>
<div class="abs" style="left:310px;top:0;width:1px;height:38px;background:#eceef4"></div>
<div class="abs" style="left:470px;top:0;width:1px;height:38px;background:#eceef4"></div>
<div class="abs" style="left:630px;top:0;width:1px;height:38px;background:#eceef4"></div>
<div class="abs" style="left:790px;top:0;width:1px;height:38px;background:#eceef4"></div>
<div class="abs" style="left:950px;top:0;width:1px;height:38px;background:#eceef4"></div>
<div class="abs" style="left:1110px;top:0;width:1px;height:38px;background:#eceef4"></div>
<div class="abs" style="left:1270px;top:0;width:1px;height:38px;background:#eceef4"></div>
<div class="abs" style="left:1430px;top:0;width:1px;height:38px;background:#eceef4"></div>
<div class="abs" style="left:1448px;top:0;width:1px;height:38px;background:#eceef4"></div>
<div class="abs" style="left:1539px;top:0;width:1px;height:38px;background:#eceef4"></div>
<span class="c amt" style="left:961px;line-height:38px;font-size:13.5px">15,054,352,120.46</span>
<span class="c amt" style="left:1121px;line-height:38px;font-size:13.5px">0.00</span>
<span class="c amt" style="left:1281px;line-height:38px;font-size:13.5px">15,054,352,120.46</span>
  </div>
  <div class="abs" style="left:0;top:0;width:1px;height:783px;background:#eceef4"></div>
  <div class="abs" style="left:0;top:0;width:1547px;height:1px;background:#eceef4"></div>
  <div class="abs" style="left:1546px;top:0;width:1px;height:783px;background:#eceef4"></div>
</div>

<!-- footer -->
<span class="abs" style="left:287px;top:865px;font-size:12.5px;color:#555b66;line-height:20px">已选 0 条</span>
<div class="btn" style="left:357px;top:859px;width:56px;color:#c5c8ce;border-color:#eef0f4">删除</div>
<span class="abs" style="left:1124px;top:865px;font-size:13px;color:#555b66;line-height:20px">共 237 条</span>
<div class="abs" style="left:1197px;top:861px;width:99px;height:28px;border:1px solid #e3e6ec;border-radius:3px;font-size:13px;color:#555;line-height:26px;padding-left:16px">20条/页
  <svg class="abs" width="12" height="12" viewBox="0 0 12 12" style="left:78px;top:8px"><path d="M2 4 L6 8 L10 4" fill="none" stroke="#c0c4cc" stroke-width="1"/></svg></div>
<div class="pg" style="left:1316px;font-weight:normal;font-size:18px;color:#c0c4cc;line-height:26px;">‹</div>
<div class="pg" style="left:1356px;background:#4a88f7;color:#fff;">1</div>
<div class="pg" style="left:1396px;">2</div>
<div class="pg" style="left:1436px;">3</div>
<div class="pg" style="left:1476px;">4</div>
<div class="pg" style="left:1516px;">5</div>
<div class="pg" style="left:1556px;">6</div>
<div class="pg" style="left:1596px;">···</div>
<div class="pg" style="left:1636px;">12</div>
<div class="pg" style="left:1676px;font-weight:normal;font-size:18px;color:#555;line-height:26px;">›</div>
<span class="abs" style="left:1734px;top:866px;font-size:13px;color:#555b66;line-height:20px">前往</span>
<div class="abs" style="left:1765px;top:861px;width:46px;height:28px;border:1px solid #e3e6ec;border-radius:3px;font-size:13px;color:#555;line-height:26px;text-align:center">1</div>
<span class="abs" style="left:1815px;top:866px;font-size:13px;color:#555b66;line-height:20px">页</span>
</body></html>
